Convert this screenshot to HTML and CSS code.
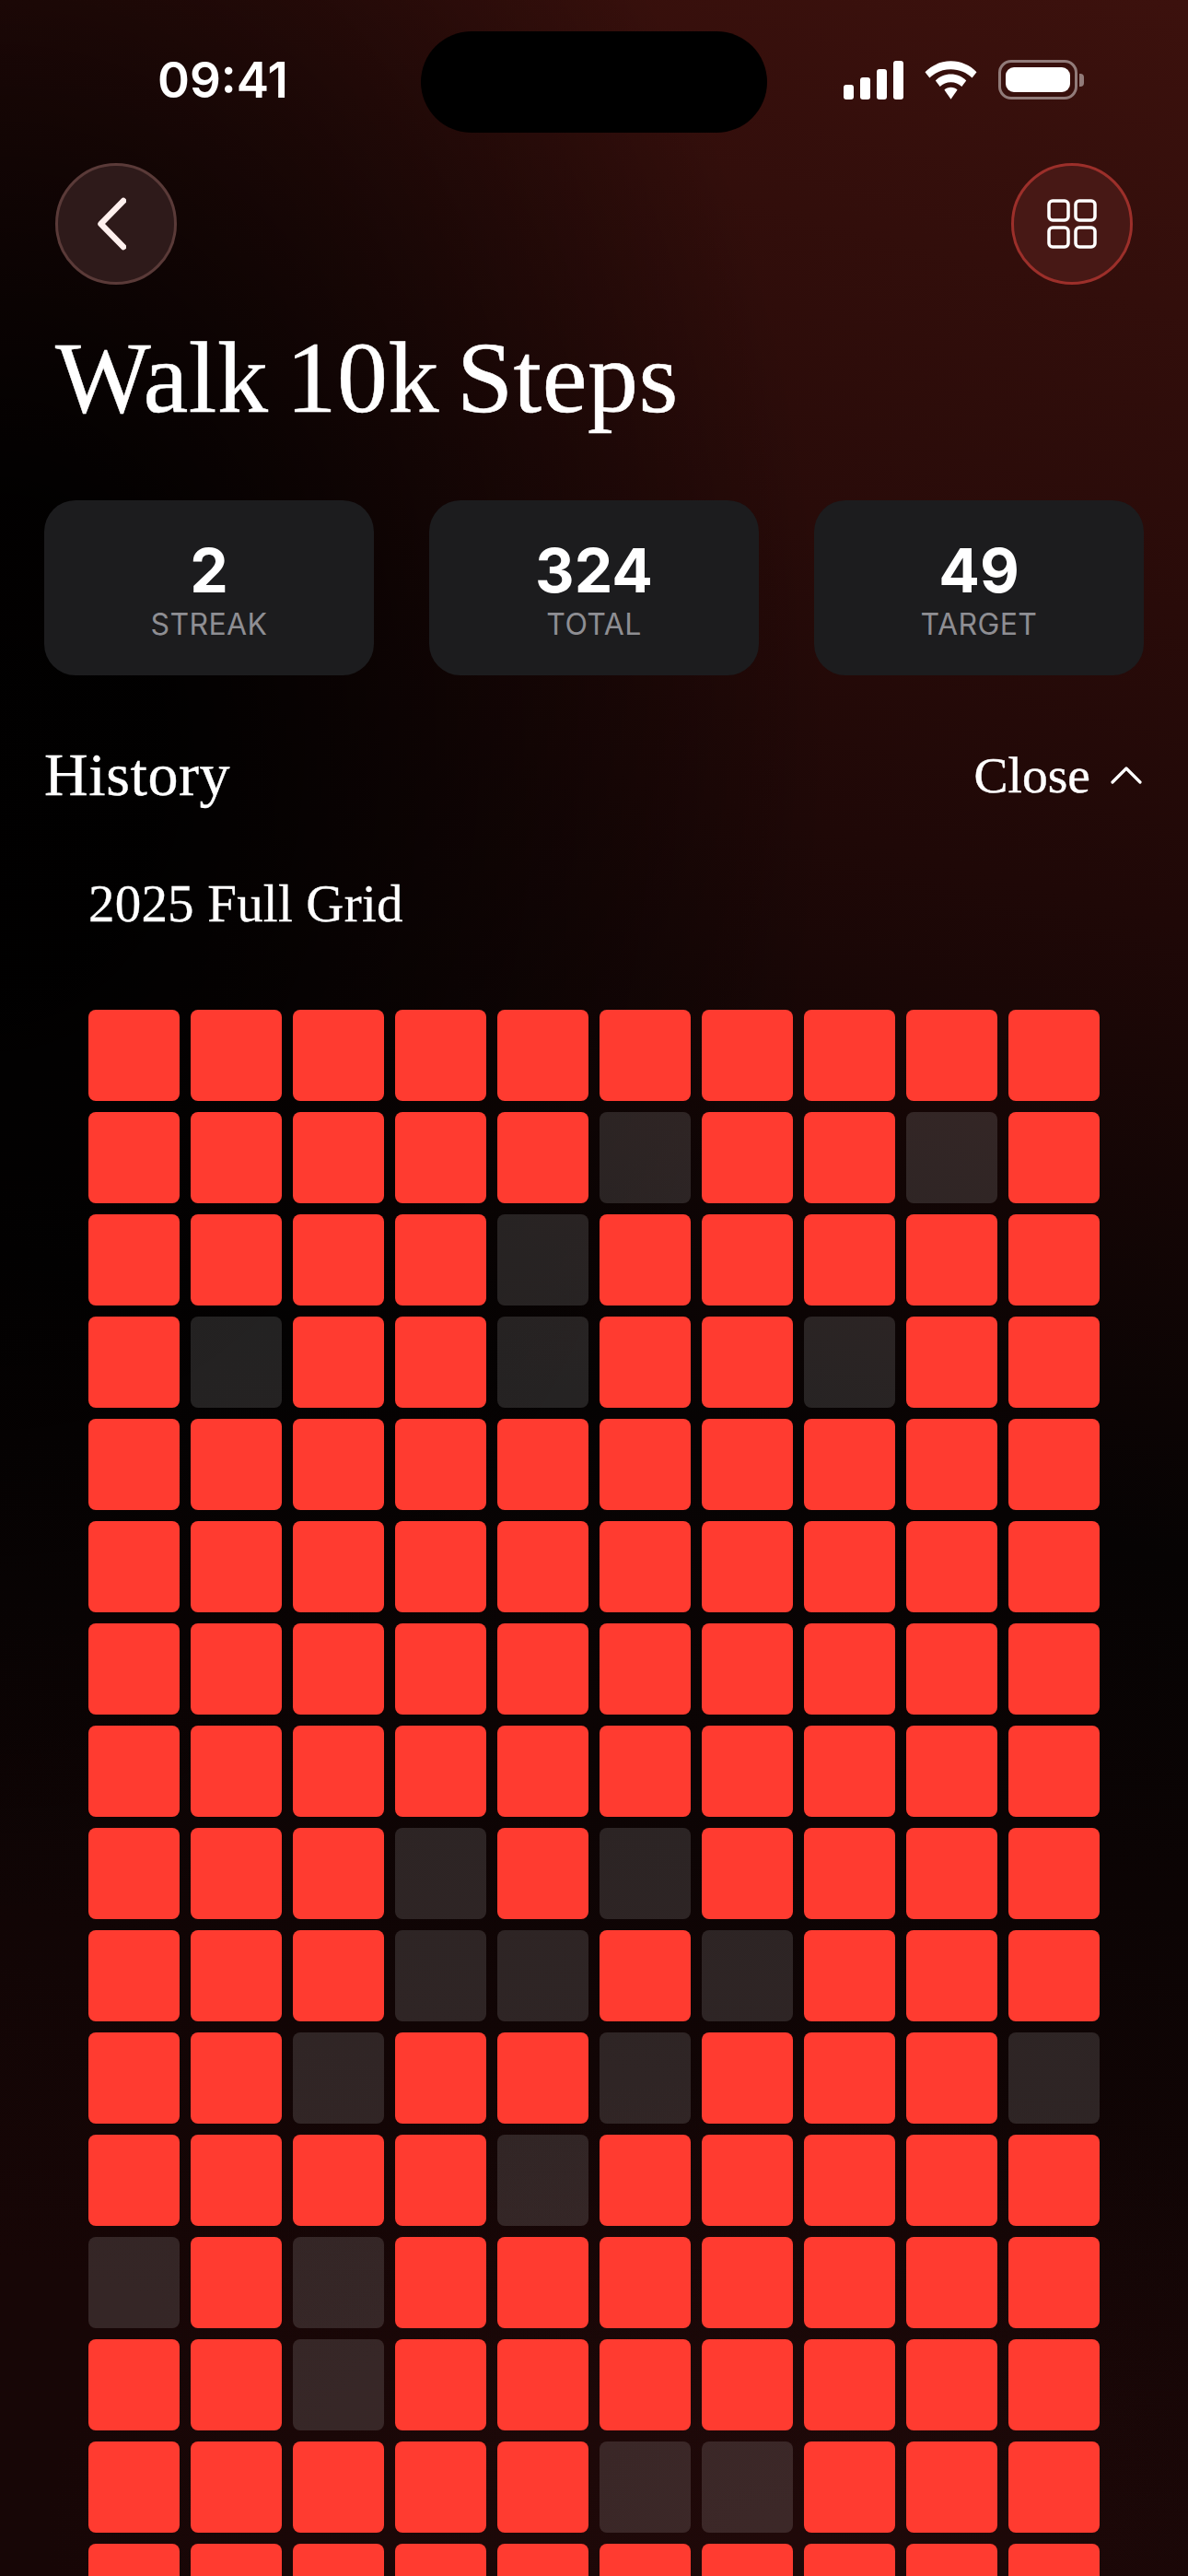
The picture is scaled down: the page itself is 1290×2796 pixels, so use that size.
FILE: index.html
```html
<!DOCTYPE html>
<html lang="en">

<head>
  <meta charset="UTF-8" />
  <meta name="viewport" content="width=device-width, initial-scale=1.0" />
  <title>Walk 10k Steps</title>
  <link rel="stylesheet" href="styles.css">
</head>

<body>
  <div class="island"></div>

  <header class="status-bar">
    <span class="time">09:41</span>
    <div class="status-icons">
      <svg class="signal" width="65" height="42" viewBox="0 0 65 42" fill="#fff">
        <rect x="0" y="26" width="11" height="16" rx="3" />
        <rect x="18" y="18" width="11" height="24" rx="3" />
        <rect x="36" y="9" width="11" height="33" rx="3" />
        <rect x="54" y="0" width="11" height="42" rx="3" />
      </svg>
      <svg class="wifi" width="57" height="42" viewBox="0 0 58 42" fill="#fff">
        <path d="M29 0C40 0 50 4.500 57.500 12L52.500 18.500C46.500 12.500 38.300 9 29 9S11.500 12.500 5.500 18.500L.5 12C8 4.500 18 0 29 0Z" />
        <path d="M29 14.500C35.500 14.500 41.500 17 46 21.500L41 28C37.800 25 33.600 23.300 29 23.300S20.200 25 17 28L12 21.500C16.500 17 22.500 14.500 29 14.500Z" />
        <path d="M29 29C31.800 29 34.300 30 36.200 31.800L29 42L21.800 31.800C23.700 30 26.200 29 29 29Z" />
      </svg>
      <div class="battery">
        <div class="battery-body"><div class="battery-fill"></div></div>
        <div class="battery-nub"></div>
      </div>
    </div>
  </header>

  <nav class="top-nav">
    <button class="round-btn back-btn">
      <svg width="36" height="60" viewBox="0 0 36 60" fill="none" stroke="#fff0ee" stroke-width="6.500" stroke-linecap="round" stroke-linejoin="round">
        <path d="M33 5L8.500 30L33 55" />
      </svg>
    </button>
    <button class="round-btn grid-btn">
      <svg width="54" height="54" viewBox="0 0 54 54" fill="none" stroke="#fff" stroke-width="3.500">
        <rect x="2" y="2" width="21" height="21" rx="4" />
        <rect x="31" y="2" width="21" height="21" rx="4" />
        <rect x="2" y="31" width="21" height="21" rx="4" />
        <rect x="31" y="31" width="21" height="21" rx="4" />
      </svg>
    </button>
  </nav>

  <h1 class="title">Walk 10k Steps</h1>

  <section class="stats">
    <div class="stat-card">
      <div class="stat-value">2</div>
      <div class="stat-label">STREAK</div>
    </div>
    <div class="stat-card">
      <div class="stat-value">324</div>
      <div class="stat-label">TOTAL</div>
    </div>
    <div class="stat-card">
      <div class="stat-value">49</div>
      <div class="stat-label">TARGET</div>
    </div>
  </section>

  <div class="history-head">
    <h2>History</h2>
    <div class="close-toggle">
      <span>Close</span>
      <svg width="34" height="20" viewBox="0 0 34 20" fill="none" stroke="#fff" stroke-width="3.200" stroke-linecap="round" stroke-linejoin="round">
        <path d="M2 18L17 3L32 18" />
      </svg>
    </div>
  </div>

  <h3 class="grid-title">2025 Full Grid</h3>

  <main class="year-grid" id="yearGrid"></main>

  <script>
    // cells that were missed, as row:col
    const missed = ['1:5', '1:8', '2:4', '3:1', '3:4', '3:7', '8:3', '8:5', '9:3', '9:4', '9:6',
      '10:2', '10:5', '10:9', '11:4', '12:0', '12:2', '13:2', '14:5', '14:6'];

    const grid = document.getElementById('yearGrid');
    for (let row = 0; row < 16; row++) {
      for (let col = 0; col < 10; col++) {
        const cell = document.createElement('div');
        cell.className = missed.includes(row + ':' + col) ? 'cell off' : 'cell';
        grid.appendChild(cell);
      }
    }
  </script>
</body>

</html>
```

FILE: styles.css
```css
* { margin: 0; padding: 0; box-sizing: border-box; }
html, body { height: 2796px; overflow: hidden; }
body {
  position: relative;
  width: 1290px;
  color: #fff;
  font-family: "Liberation Serif", serif;
  background-color: #000;
  background-image:
    radial-gradient(900px 1300px at 0 800px, rgba(0, 0, 0, 0.95) 20%, rgba(0, 0, 0, 0) 100%),
    radial-gradient(800px 500px at 850px 2750px, rgba(40, 12, 12, 0.5), rgba(0, 0, 0, 0) 100%),
    linear-gradient(195deg, #3c110d 0%, #1f0807 32%, #060303 54%, #170606 89%, #170606 100%);
}

/* Status bar */
.island {
  position: absolute;
  top: 34px;
  left: 457px;
  width: 376px;
  height: 110px;
  background: #000;
  border-radius: 55px;
}
.status-bar {
  display: flex;
  justify-content: space-between;
  align-items: flex-start;
  height: 177px;
  padding: 57px 113px 0 171px;
}
.time {
  font-family: Inter, sans-serif;
  font-size: 53px;
  font-weight: 600;
  line-height: 60px;
}
.status-icons {
  display: flex;
  align-items: center;
  gap: 23px;
  margin-top: 8px;
}
.battery { display: flex; align-items: center; gap: 2px; }
.battery-body {
  width: 86px;
  height: 43px;
  padding: 5px;
  border: 3px solid rgba(255, 255, 255, 0.45);
  border-radius: 14px;
}
.battery-fill {
  height: 100%;
  background: #fff;
  border-radius: 9px;
}
.battery-nub {
  width: 5px;
  height: 14px;
  background: rgba(255, 255, 255, 0.45);
  border-radius: 0 4px 4px 0;
}

/* Top buttons */
.top-nav {
  display: flex;
  justify-content: space-between;
  padding: 0 60px;
}
.round-btn {
  display: flex;
  align-items: center;
  justify-content: center;
  width: 132px;
  height: 132px;
  border-radius: 50%;
}
.back-btn { background: #2e1a1a; border: 3px solid #5a3a38; }
.back-btn svg { margin-right: 14px; }
.grid-btn { background: #471815; border: 3px solid #9c2f2a; }

.title {
  margin-top: 40px;
  padding-left: 60px;
  font-size: 110px;
  font-weight: 400;
  line-height: 122px;
  letter-spacing: 0.5px;
  word-spacing: -9px;
  -webkit-text-stroke: 0.5px #fff;
}

/* Stat cards */
.stats {
  display: grid;
  grid-template-columns: repeat(3, 358px);
  gap: 60px;
  margin-top: 72px;
  padding: 0 48px;
}
.stat-card {
  height: 190px;
  padding-top: 38px;
  background: #1c1c1e;
  border-radius: 34px;
  text-align: center;
}
.stat-value {
  font-family: Inter, sans-serif;
  font-size: 66px;
  font-weight: 700;
  line-height: 76px;
}
.stat-label {
  margin-top: 1px;
  font-family: Inter, sans-serif;
  font-size: 32px;
  line-height: 40px;
  letter-spacing: 0.4px;
  color: #8e8e93;
}

/* History header */
.history-head {
  display: flex;
  justify-content: space-between;
  align-items: center;
  height: 80px;
  margin-top: 68px;
  padding: 0 50px 0 48px;
}
.history-head h2 {
  font-size: 66px;
  font-weight: 400;
  letter-spacing: 0.6px;
  -webkit-text-stroke: 0.4px #fff;
}
.close-toggle {
  display: flex;
  align-items: center;
  gap: 22px;
  font-size: 55.500px;
  -webkit-text-stroke: 0.4px #fff;
}
.grid-title {
  margin-top: 67px;
  padding-left: 96px;
  font-size: 57px;
  font-weight: 400;
  line-height: 66px;
  letter-spacing: 0.2px;
  -webkit-text-stroke: 0.3px #fff;
}

/* Year grid */
.year-grid {
  display: grid;
  grid-template-columns: repeat(10, 99px);
  grid-auto-rows: 99px;
  gap: 12px;
  margin-top: 82px;
  padding-left: 96px;
}
.cell {
  background: #ff3b30;
  border-radius: 8px;
}
.cell.off { background: rgba(255, 255, 255, 0.13); }
```
